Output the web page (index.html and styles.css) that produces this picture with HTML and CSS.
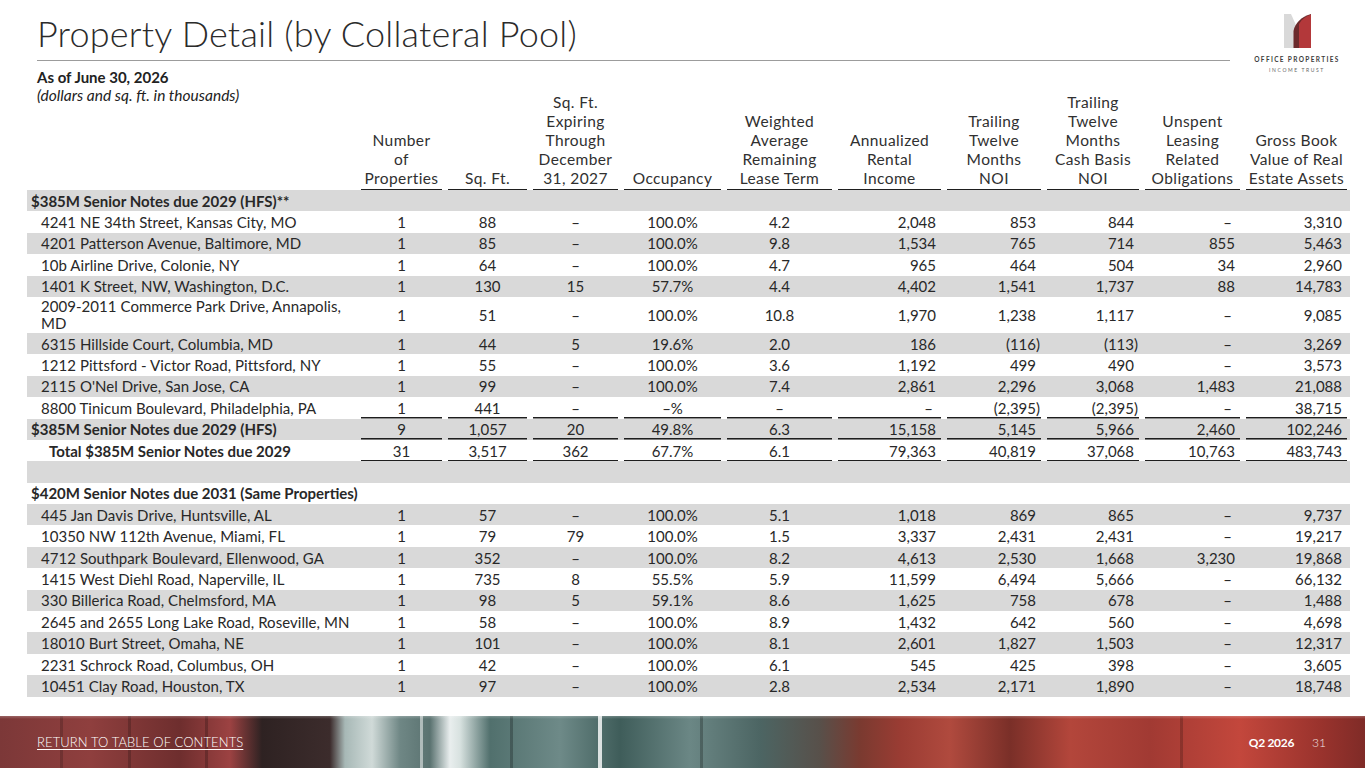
FILE: index.html
```html
<!DOCTYPE html>
<html lang="en">
<head>
<meta charset="utf-8">
<title>Property Detail (by Collateral Pool)</title>
<link rel="stylesheet" href="styles.css">
</head>
<body>
<header class="top">
  <div class="titlewrap"><h1 class="title">Property Detail (by Collateral Pool)</h1></div>
  <div class="logo">
    <svg class="mark" width="27" height="34" viewBox="0 0 27 34" aria-hidden="true">
      <path d="M0 0 H7 L11.5 10 V34 H0 Z" fill="#d9d9d9"/>
      <path d="M9.5 34 V17 C11 9 17 3 27 0 V34 Z" fill="#6b2a2c"/>
      <path d="M15 34 V10 C18 5 22 2 27 0.5 V34 Z" fill="#b3383a"/>
    </svg>
    <div class="brand1">OFFICE PROPERTIES</div>
    <div class="brand2">INCOME TRUST</div>
  </div>
</header>
<div class="asof">As of June 30, 2026</div>
<table class="grid">
  <colgroup>
    <col class="w-lab"><col class="w-87"><col class="w-85"><col class="w-91"><col class="w-103"><col class="w-111"><col class="w-109"><col class="w-100"><col class="w-98"><col class="w-101"><col class="w-107">
  </colgroup>
  <thead>
    <tr>
      <th class="lab"><em>(dollars and sq. ft. in thousands)</em></th>
      <th class="u">Number<br>of<br>Properties</th>
      <th class="u">Sq. Ft.</th>
      <th class="u">Sq. Ft.<br>Expiring<br>Through<br>December<br>31, 2027</th>
      <th class="u">Occupancy</th>
      <th class="u">Weighted<br>Average<br>Remaining<br>Lease Term</th>
      <th class="u">Annualized<br>Rental<br>Income</th>
      <th class="u">Trailing<br>Twelve<br>Months<br>NOI</th>
      <th class="u">Trailing<br>Twelve<br>Months<br>Cash Basis<br>NOI</th>
      <th class="u">Unspent<br>Leasing<br>Related<br>Obligations</th>
      <th class="u">Gross Book<br>Value of Real<br>Estate Assets</th>
    </tr>
  </thead>
  <tbody>
    <tr class="gray grp"><td class="lab" colspan="11">$385M Senior Notes due 2029 (HFS)**</td></tr>
    <tr><td class="lab">4241 NE 34th Street, Kansas City, MO</td><td>1</td><td>88</td><td>–</td><td>100.0%</td><td>4.2</td><td class="r">2,048</td><td class="r">853</td><td class="r">844</td><td class="r dash">–</td><td class="r">3,310</td></tr>
    <tr class="gray"><td class="lab">4201 Patterson Avenue, Baltimore, MD</td><td>1</td><td>85</td><td>–</td><td>100.0%</td><td>9.8</td><td class="r">1,534</td><td class="r">765</td><td class="r">714</td><td class="r">855</td><td class="r">5,463</td></tr>
    <tr><td class="lab">10b Airline Drive, Colonie, NY</td><td>1</td><td>64</td><td>–</td><td>100.0%</td><td>4.7</td><td class="r">965</td><td class="r">464</td><td class="r">504</td><td class="r">34</td><td class="r">2,960</td></tr>
    <tr class="gray"><td class="lab">1401 K Street, NW, Washington, D.C.</td><td>1</td><td>130</td><td>15</td><td>57.7%</td><td>4.4</td><td class="r">4,402</td><td class="r">1,541</td><td class="r">1,737</td><td class="r">88</td><td class="r">14,783</td></tr>
    <tr class="dbl"><td class="lab wrap">2009-2011 Commerce Park Drive, Annapolis,<br>MD</td><td>1</td><td>51</td><td>–</td><td>100.0%</td><td>10.8</td><td class="r">1,970</td><td class="r">1,238</td><td class="r">1,117</td><td class="r dash">–</td><td class="r">9,085</td></tr>
    <tr class="gray"><td class="lab">6315 Hillside Court, Columbia, MD</td><td>1</td><td>44</td><td>5</td><td>19.6%</td><td>2.0</td><td class="r">186</td><td class="r"><span class="neg">(116)</span></td><td class="r"><span class="neg">(113)</span></td><td class="r dash">–</td><td class="r">3,269</td></tr>
    <tr><td class="lab">1212 Pittsford - Victor Road, Pittsford, NY</td><td>1</td><td>55</td><td>–</td><td>100.0%</td><td>3.6</td><td class="r">1,192</td><td class="r">499</td><td class="r">490</td><td class="r dash">–</td><td class="r">3,573</td></tr>
    <tr class="gray"><td class="lab">2115 O'Nel Drive, San Jose, CA</td><td>1</td><td>99</td><td>–</td><td>100.0%</td><td>7.4</td><td class="r">2,861</td><td class="r">2,296</td><td class="r">3,068</td><td class="r">1,483</td><td class="r">21,088</td></tr>
    <tr class="line"><td class="lab">8800 Tinicum Boulevard, Philadelphia, PA</td><td class="u">1</td><td class="u">441</td><td class="u">–</td><td class="u">–%</td><td class="u">–</td><td class="r u dash">–</td><td class="r u"><span class="neg">(2,395)</span></td><td class="r u"><span class="neg">(2,395)</span></td><td class="r u dash">–</td><td class="r u">38,715</td></tr>
    <tr class="gray sub"><td class="lab">$385M Senior Notes due 2029 (HFS)</td><td class="u">9</td><td class="u">1,057</td><td class="u">20</td><td class="u">49.8%</td><td class="u">6.3</td><td class="r u">15,158</td><td class="r u">5,145</td><td class="r u">5,966</td><td class="r u">2,460</td><td class="r u">102,246</td></tr>
    <tr class="tot"><td class="lab">Total $385M Senior Notes due 2029</td><td class="u">31</td><td class="u">3,517</td><td class="u">362</td><td class="u">67.7%</td><td class="u">6.1</td><td class="r u">79,363</td><td class="r u">40,819</td><td class="r u">37,068</td><td class="r u">10,763</td><td class="r u">483,743</td></tr>
    <tr class="gray"><td class="lab" colspan="11"></td></tr>
    <tr class="grp"><td class="lab" colspan="11">$420M Senior Notes due 2031 (Same Properties)</td></tr>
    <tr class="gray"><td class="lab">445 Jan Davis Drive, Huntsville, AL</td><td>1</td><td>57</td><td>–</td><td>100.0%</td><td>5.1</td><td class="r">1,018</td><td class="r">869</td><td class="r">865</td><td class="r dash">–</td><td class="r">9,737</td></tr>
    <tr><td class="lab">10350 NW 112th Avenue, Miami, FL</td><td>1</td><td>79</td><td>79</td><td>100.0%</td><td>1.5</td><td class="r">3,337</td><td class="r">2,431</td><td class="r">2,431</td><td class="r dash">–</td><td class="r">19,217</td></tr>
    <tr class="gray"><td class="lab">4712 Southpark Boulevard, Ellenwood, GA</td><td>1</td><td>352</td><td>–</td><td>100.0%</td><td>8.2</td><td class="r">4,613</td><td class="r">2,530</td><td class="r">1,668</td><td class="r">3,230</td><td class="r">19,868</td></tr>
    <tr><td class="lab">1415 West Diehl Road, Naperville, IL</td><td>1</td><td>735</td><td>8</td><td>55.5%</td><td>5.9</td><td class="r">11,599</td><td class="r">6,494</td><td class="r">5,666</td><td class="r dash">–</td><td class="r">66,132</td></tr>
    <tr class="gray"><td class="lab">330 Billerica Road, Chelmsford, MA</td><td>1</td><td>98</td><td>5</td><td>59.1%</td><td>8.6</td><td class="r">1,625</td><td class="r">758</td><td class="r">678</td><td class="r dash">–</td><td class="r">1,488</td></tr>
    <tr><td class="lab">2645 and 2655 Long Lake Road, Roseville, MN</td><td>1</td><td>58</td><td>–</td><td>100.0%</td><td>8.9</td><td class="r">1,432</td><td class="r">642</td><td class="r">560</td><td class="r dash">–</td><td class="r">4,698</td></tr>
    <tr class="gray"><td class="lab">18010 Burt Street, Omaha, NE</td><td>1</td><td>101</td><td>–</td><td>100.0%</td><td>8.1</td><td class="r">2,601</td><td class="r">1,827</td><td class="r">1,503</td><td class="r dash">–</td><td class="r">12,317</td></tr>
    <tr><td class="lab">2231 Schrock Road, Columbus, OH</td><td>1</td><td>42</td><td>–</td><td>100.0%</td><td>6.1</td><td class="r">545</td><td class="r">425</td><td class="r">398</td><td class="r dash">–</td><td class="r">3,605</td></tr>
    <tr class="gray"><td class="lab">10451 Clay Road, Houston, TX</td><td>1</td><td>97</td><td>–</td><td>100.0%</td><td>2.8</td><td class="r">2,534</td><td class="r">2,171</td><td class="r">1,890</td><td class="r dash">–</td><td class="r">18,748</td></tr>
  </tbody>
</table>
<footer class="foot">
  <a class="toc" href="#">RETURN TO TABLE OF CONTENTS</a>
  <div class="pg"><span class="q">Q2 2026</span><span class="num">31</span></div>
</footer>
</body>
</html>
```

FILE: styles.css
```css
* { box-sizing: border-box; }

html, body { margin: 0; padding: 0; }

body {
  width: 1365px;
  height: 768px;
  overflow: hidden;
  display: flex;
  flex-direction: column;
  background: #ffffff;
  color: #282828;
  font-family: Lato, "Open Sans", "Liberation Sans", sans-serif;
}

/* ---------- header ---------- */
.top {
  display: flex;
  align-items: flex-start;
  padding: 0 20px 0 37px;
  height: 61px;
}

.titlewrap {
  flex: 1;
  height: 61px;
  padding-top: 12px;
  border-bottom: 1px solid #9c9c9c;
}

.title {
  margin: 0;
  font-size: 36px;
  font-weight: 300;
  line-height: 42px;
  color: #2b2b2b;
  letter-spacing: 0.2px;
}

.logo {
  width: 96px;
  margin-left: 19px;
  padding-top: 14px;
  display: flex;
  flex-direction: column;
  align-items: center;
}

.mark { display: block; }

.brand1 {
  margin-top: 8px;
  font-size: 6.5px;
  font-weight: 700;
  letter-spacing: 1.35px;
  line-height: 8px;
  color: #3d3d3d;
  white-space: nowrap;
}

.brand2 {
  margin-top: 3px;
  font-size: 5px;
  letter-spacing: 1.6px;
  line-height: 6px;
  color: #666;
  white-space: nowrap;
}

.asof {
  margin-top: 7px;
  padding-left: 37px;
  font-size: 15px;
  font-weight: 700;
  line-height: 18px;
  color: #222;
}

/* ---------- table ---------- */
.grid {
  margin-left: 27px;
  width: 1323px;
  table-layout: fixed;
  border-collapse: collapse;
  font-size: 15px;
}

.w-lab { width: 331px; }
.w-87 { width: 87px; }
.w-85 { width: 85px; }
.w-91 { width: 91px; }
.w-103 { width: 103px; }
.w-111 { width: 111px; }
.w-109 { width: 109px; }
.w-100 { width: 100px; }
.w-98 { width: 98px; }
.w-101 { width: 101px; }
.w-107 { width: 107px; }

.grid thead th {
  height: 104px;
  padding: 0 0 2px;
  vertical-align: bottom;
  text-align: center;
  font-weight: 400;
  font-size: 15.5px;
  letter-spacing: 0.4px;
  line-height: 19px;
  color: #303030;
  white-space: nowrap;
}

.grid thead th.lab {
  vertical-align: top;
  text-align: left;
  padding: 0 0 0 10px;
  font-size: 15.5px;
  letter-spacing: 0;
  line-height: 18px;
  color: #222;
}

.grid td {
  height: 21.4px;
  padding: 0;
  line-height: 20px;
  text-align: center;
  white-space: nowrap;
  vertical-align: middle;
}

.grid td.lab {
  text-align: left;
  padding-left: 14px;
  letter-spacing: 0.05px;
}

.grid td.r {
  text-align: right;
  padding-right: 8px;
}

.grid td.dash { padding-right: 11px; }

.neg { margin-right: -4px; }

.u {
  background-image: linear-gradient(#1e1e1e, #1e1e1e);
  background-repeat: no-repeat;
  background-size: calc(100% - 6px) 1.5px;
  background-position: 3px 100%;
}

.gray { background: #d9d9d9; }

.grp td.lab,
.sub td.lab {
  padding-left: 4px;
  font-weight: 700;
  letter-spacing: 0;
}

.tot td.lab {
  padding-left: 22px;
  font-weight: 700;
  letter-spacing: 0;
}

.dbl td { height: 36px; }
.dbl td.wrap { white-space: nowrap; line-height: 17px; }

/* ---------- footer ---------- */
.foot {
  margin-top: auto;
  height: 52px;
  display: flex;
  align-items: center;
  justify-content: space-between;
  padding: 0 39px 0 37px;
  color: #fff;
  background-color: #8a3a36;
  background-image:
    linear-gradient(180deg, rgba(255,255,255,0.22) 0, rgba(255,255,255,0) 3px),
    linear-gradient(90deg,
      rgba(0,0,0,0) 0 60px, rgba(0,0,0,0.18) 60px 63px, rgba(0,0,0,0) 63px 128px,
      rgba(0,0,0,0.2) 128px 131px, rgba(0,0,0,0) 131px 205px, rgba(0,0,0,0.22) 205px 208px,
      rgba(0,0,0,0) 208px 420px, rgba(255,255,255,0.5) 420px 423px, rgba(0,0,0,0) 423px 510px,
      rgba(0,0,0,0.25) 510px 513px, rgba(0,0,0,0) 513px 598px, rgba(255,255,255,0.8) 598px 602px,
      rgba(0,0,0,0) 602px 700px, rgba(0,0,0,0.25) 700px 703px, rgba(0,0,0,0) 703px 1180px,
      rgba(0,0,0,0.2) 1180px 1183px, rgba(0,0,0,0) 1183px 1365px),
    linear-gradient(90deg,
      #7c3838 0px, #8f3f3e 90px, #6e2e2e 180px, #9c4242 230px,
      #2e2222 262px, #3c2c2c 330px, #a7b8b6 345px, #d0dad8 372px,
      #6f8785 400px, #5a7270 430px, #e9eeee 450px, #d8e2e0 460px,
      #51706d 490px, #6e8a88 560px, #3f5d5a 620px, #6b8785 690px,
      #4c6563 760px, #58504a 820px, #7a3a30 860px, #9a3c33 900px,
      #b04a3e 950px, #7a2f28 1010px, #b3463b 1070px, #a13a33 1150px,
      #c3473c 1240px, #9a332d 1320px, #7f2b27 1365px);
}

.toc {
  color: #fff;
  font-size: 13px;
  font-weight: 300;
  text-decoration: underline;
  text-underline-offset: 2px;
  letter-spacing: 0.1px;
}

.pg {
  display: flex;
  align-items: baseline;
  gap: 18px;
  font-size: 12px;
}

.q { font-weight: 700; letter-spacing: -0.3px; }
.num { font-weight: 300; color: #f1e6e6; }
```
